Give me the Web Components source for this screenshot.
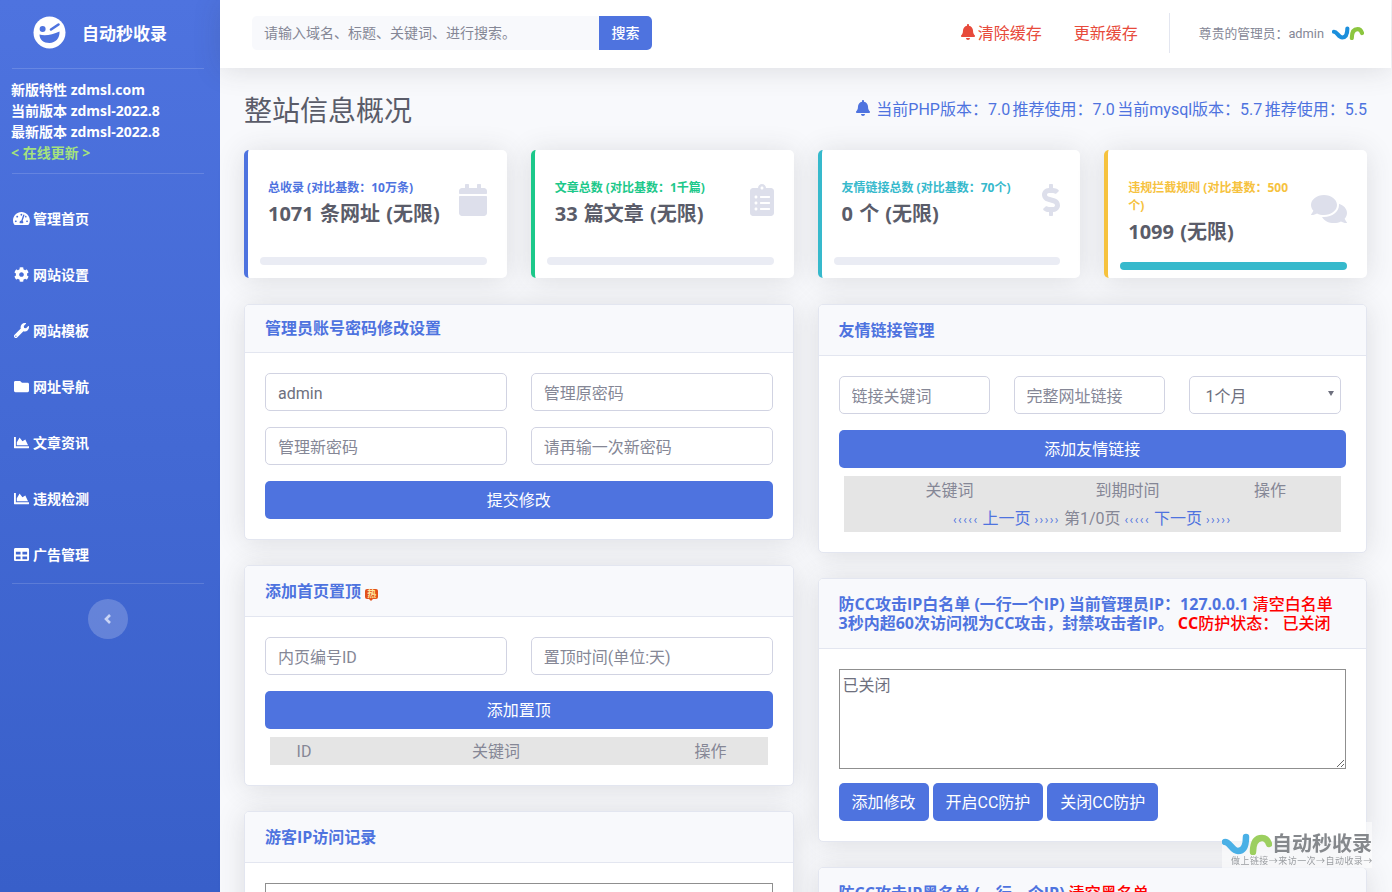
<!DOCTYPE html>
<html lang="zh-CN">
<head>
<meta charset="utf-8">
<title>整站信息概况</title>
<style>
  html, body { margin: 0; height: 100%; overflow: hidden; background: #f8f9fc; }
  body { font-family: Roboto, "Noto Sans CJK SC", sans-serif; font-size: 16px; color: #858796; }
</style>
</head>
<body>
<app-shell>
  <side-bar slot="sidebar">
    <side-item icon="gauge" label="管理首页"></side-item>
    <side-item icon="cog" label="网站设置"></side-item>
    <side-item icon="wrench" label="网站模板"></side-item>
    <side-item icon="folder" label="网址导航"></side-item>
    <side-item icon="area" label="文章资讯"></side-item>
    <side-item icon="area" label="违规检测"></side-item>
    <side-item icon="table" label="广告管理"></side-item>
  </side-bar>
  <top-bar slot="top"></top-bar>

  <page-heading></page-heading>

  <stat-row>
    <stat-card color="#4e73df" icon="calendar" label="总收录 (对比基数：10万条)" value="1071 条网址 (无限)" style="--bar-gap:31px"></stat-card>
    <stat-card color="#1cc88a" icon="clipboard" label="文章总数 (对比基数：1千篇)" value="33 篇文章 (无限)" style="--bar-gap:31px"></stat-card>
    <stat-card color="#36b9cc" icon="dollar" label="友情链接总数 (对比基数：70个)" value="0 个 (无限)" style="--bar-gap:31px"></stat-card>
    <stat-card color="#f6c23e" icon="comments" label="违规拦截规则 (对比基数：500个)" value="1099 (无限)" fill="100" style="--bar-gap:18px;--text-w:170px"></stat-card>
  </stat-row>

  <two-cols>
    <div slot="left">
      <panel-card style="--head:48px">
        <span slot="title">管理员账号密码修改设置</span>
        <form-row>
          <text-field value="admin"></text-field>
          <text-field placeholder="管理原密码"></text-field>
          <text-field placeholder="管理新密码"></text-field>
          <text-field placeholder="请再输一次新密码"></text-field>
        </form-row>
        <action-button block>提交修改</action-button>
      </panel-card>

      <panel-card>
        <span slot="title">添加首页置顶 <hot-badge></hot-badge></span>
        <form-row>
          <text-field placeholder="内页编号ID"></text-field>
          <text-field placeholder="置顶时间(单位:天)"></text-field>
        </form-row>
        <action-button block style="--after:8px">添加置顶</action-button>
        <mini-table columns="68px 316px 113px" heads="ID,关键词,操作"></mini-table>
      </panel-card>

      <panel-card>
        <span slot="title">游客IP访问记录</span>
        <box-area rows="10"></box-area>
      </panel-card>
    </div>

    <div slot="right">
      <panel-card>
        <span slot="title">友情链接管理</span>
        <link-form></link-form>
        <action-button block style="--after:8px">添加友情链接</action-button>
        <mini-table columns="212px 144px 141px" heads="关键词,到期时间,操作" pager></mini-table>
      </panel-card>

      <panel-card style="--head:70px">
        <span slot="title">防CC攻击IP白名单 (一行一个IP) 当前管理员IP：127.0.0.1 <span style="color:#f00;font-weight:500">清空白名单</span><br>3秒内超60次访问视为CC攻击，封禁攻击者IP。 <span style="color:#f00;font-weight:500"><b>CC</b>防护状态： 已关闭</span></span>
        <box-area rows="4" value="已关闭"></box-area>
        <button-row>
          <action-button>添加修改</action-button>
          <action-button>开启CC防护</action-button>
          <action-button>关闭CC防护</action-button>
        </button-row>
      </panel-card>

      <panel-card style="--head:70px;--head-align:flex-start;--head-pad:16px">
        <span slot="title">防CC攻击IP黑名单 (一行一个IP) <span style="color:#f00;font-weight:500">清空黑名单</span></span>
      </panel-card>
    </div>
  </two-cols>
</app-shell>
<site-watermark></site-watermark>

<script>
const BOLD_FONT = '"Open Sans", "Noto Sans CJK SC", sans-serif';

const ICONS = {
  gauge: ["0 0 576 512", "M288 32C128.94 32 0 160.94 0 320c0 52.8 14.25 102.26 39.06 144.8 5.61 9.62 16.3 15.2 27.44 15.2h443c11.14 0 21.83-5.58 27.44-15.2C561.75 422.26 576 372.8 576 320c0-159.06-128.94-288-288-288zm0 64c14.71 0 26.58 10.13 30.32 23.65-1.11 2.26-2.64 4.23-3.45 6.67l-9.22 27.67c-5.13 3.49-10.97 6.01-17.64 6.01-17.67 0-32-14.33-32-32S270.33 96 288 96zM96 384c-17.67 0-32-14.33-32-32s14.33-32 32-32 32 14.33 32 32-14.33 32-32 32zm48-160c-17.67 0-32-14.33-32-32s14.33-32 32-32 32 14.33 32 32-14.33 32-32 32zm246.77-72.41l-61.33 184C343.13 347.33 352 364.54 352 384c0 11.72-3.38 22.55-8.88 32H232.88c-5.5-9.45-8.88-20.28-8.88-32 0-33.94 26.5-61.43 59.9-63.59l61.34-184.01c4.17-12.56 17.73-19.45 30.36-15.17 12.57 4.19 19.35 17.79 15.17 30.36zm14.66 57.2l15.52-46.55c3.47-1.29 7.13-2.23 11.05-2.23 17.67 0 32 14.33 32 32s-14.33 32-32 32c-11.38-.01-20.89-6.28-26.57-15.22zM480 384c-17.67 0-32-14.33-32-32s14.33-32 32-32 32 14.33 32 32-14.33 32-32 32z"],
  cog: ["0 0 512 512", "M487.4 315.7l-42.6-24.6c4.3-23.2 4.3-47 0-70.2l42.6-24.6c4.9-2.8 7.1-8.6 5.5-14-11.1-35.6-30-67.8-54.7-94.6-3.8-4.1-10-5.1-14.8-2.3L380.8 110c-17.9-15.4-38.5-27.3-60.8-35.1V25.8c0-5.6-3.9-10.5-9.4-11.7-36.7-8.2-74.3-7.8-109.2 0-5.5 1.2-9.4 6.1-9.4 11.7V75c-22.2 7.9-42.8 19.8-60.8 35.1L88.7 85.5c-4.9-2.8-11-1.9-14.8 2.3-24.7 26.7-43.6 58.9-54.7 94.6-1.7 5.4.6 11.2 5.5 14L67.3 221c-4.3 23.2-4.3 47 0 70.2l-42.6 24.6c-4.9 2.8-7.1 8.6-5.5 14 11.1 35.6 30 67.8 54.7 94.6 3.8 4.1 10 5.1 14.8 2.3l42.6-24.6c17.9 15.4 38.5 27.3 60.8 35.1v49.2c0 5.6 3.9 10.5 9.4 11.7 36.7 8.2 74.3 7.8 109.2 0 5.5-1.2 9.4-6.1 9.4-11.7v-49.2c22.2-7.9 42.8-19.8 60.8-35.1l42.6 24.6c4.9 2.8 11 1.9 14.8-2.3 24.7-26.7 43.6-58.9 54.7-94.6 1.5-5.5-.7-11.3-5.6-14.1zM256 336c-44.1 0-80-35.9-80-80s35.9-80 80-80 80 35.9 80 80-35.9 80-80 80z"],
  wrench: ["0 0 512 512", "M507.73 109.1c-2.24-9.03-13.54-12.09-20.12-5.51l-74.36 74.36-67.88-11.31-11.31-67.88 74.36-74.36c6.62-6.62 3.43-17.9-5.66-20.16-47.38-11.74-99.55.91-136.58 37.93-39.64 39.64-50.55 97.1-34.05 147.2L18.74 402.76c-24.99 24.99-24.99 65.51 0 90.5 24.99 24.99 65.51 24.99 90.5 0l213.21-213.21c50.12 16.71 107.47 5.68 147.37-34.22 37.07-37.07 49.7-89.32 37.91-136.73zM64 472c-13.25 0-24-10.75-24-24 0-13.26 10.75-24 24-24s24 10.74 24 24c0 13.25-10.75 24-24 24z"],
  folder: ["0 0 512 512", "M464 128H272l-64-64H48C21.49 64 0 85.49 0 112v288c0 26.51 21.49 48 48 48h416c26.51 0 48-21.49 48-48V176c0-26.51-21.49-48-48-48z"],
  area: ["0 0 512 512", "M500 384c6.6 0 12 5.4 12 12v40c0 6.6-5.4 12-12 12H12c-6.6 0-12-5.4-12-12V76c0-6.6 5.4-12 12-12h40c6.6 0 12 5.4 12 12v308h436zM372.7 159.5L288 216l-85.3-113.7c-5.1-6.8-15.5-6.3-19.9 1L96 248v104h384l-89.9-187.8c-3.2-6.5-11.4-8.7-17.4-4.7z"],
  table: ["0 0 512 512", "M464 32H48C21.49 32 0 53.49 0 80v352c0 26.51 21.49 48 48 48h416c26.51 0 48-21.49 48-48V80c0-26.51-21.49-48-48-48zM224 416H64v-96h160v96zm0-160H64v-96h160v96zm224 160H288v-96h160v96zm0-160H288v-96h160v96z"],
  bell: ["0 0 448 512", "M224 512c35.32 0 63.97-28.65 63.97-64H160.03c0 35.35 28.65 64 63.97 64zm215.39-149.71c-19.32-20.76-55.47-51.99-55.47-154.29 0-77.7-54.48-139.9-127.94-155.16V32c0-17.67-14.32-32-31.98-32s-31.98 14.33-31.98 32v20.84C118.56 68.1 64.08 130.3 64.08 208c0 102.3-36.15 133.53-55.47 154.29-6 6.45-8.66 14.16-8.61 21.71.11 16.4 12.98 32 32.1 32h383.8c19.12 0 32-15.6 32.1-32 .05-7.55-2.61-15.27-8.61-21.71z"],
  calendar: ["0 0 448 512", "M12 192h424c6.6 0 12 5.4 12 12v260c0 26.5-21.5 48-48 48H48c-26.5 0-48-21.5-48-48V204c0-6.6 5.4-12 12-12zm436-44v-36c0-26.5-21.5-48-48-48h-48V12c0-6.6-5.4-12-12-12h-40c-6.6 0-12 5.4-12 12v52H160V12c0-6.6-5.4-12-12-12h-40c-6.6 0-12 5.4-12 12v52H48C21.5 64 0 85.5 0 112v36c0 6.6 5.4 12 12 12h424c6.6 0 12-5.4 12-12z"],
  clipboard: ["0 0 384 512", "M336 64h-80c0-35.3-28.7-64-64-64s-64 28.7-64 64H48C21.5 64 0 85.5 0 112v352c0 26.5 21.5 48 48 48h288c26.5 0 48-21.5 48-48V112c0-26.5-21.5-48-48-48zM96 424c-13.3 0-24-10.7-24-24s10.7-24 24-24 24 10.7 24 24-10.7 24-24 24zm0-96c-13.3 0-24-10.7-24-24s10.7-24 24-24 24 10.7 24 24-10.7 24-24 24zm0-96c-13.3 0-24-10.7-24-24s10.7-24 24-24 24 10.7 24 24-10.7 24-24 24zm96-192c13.3 0 24 10.7 24 24s-10.7 24-24 24-24-10.7-24-24 10.7-24 24-24zm128 368c0 4.4-3.6 8-8 8H168c-4.4 0-8-3.6-8-8v-16c0-4.4 3.6-8 8-8h144c4.4 0 8 3.6 8 8v16zm0-96c0 4.4-3.6 8-8 8H168c-4.4 0-8-3.6-8-8v-16c0-4.4 3.6-8 8-8h144c4.4 0 8 3.6 8 8v16zm0-96c0 4.4-3.6 8-8 8H168c-4.4 0-8-3.6-8-8v-16c0-4.4 3.6-8 8-8h144c4.4 0 8 3.6 8 8v16z"],
  dollar: ["0 0 288 512", "M209.2 233.4l-108-31.6C88.7 198.2 80 186.5 80 173.5c0-16.3 13.2-29.5 29.5-29.5h66.3c12.2 0 24.2 3.7 34.2 10.5 6.1 4.1 14.3 3.1 19.5-2l34.8-34c7.1-6.9 6.1-18.4-1.8-24.5C238 74.8 207.4 64.1 176 64V16c0-8.8-7.2-16-16-16h-32c-8.8 0-16 7.2-16 16v48h-2.5C45.8 64-5.4 118.7.5 183.6c4.2 46.1 39.4 83.6 83.8 96.6l102.5 30c12.5 3.7 21.2 15.3 21.2 28.3 0 16.3-13.2 29.5-29.5 29.5h-66.3C100 368 88 364.3 78 357.5c-6.1-4.1-14.3-3.1-19.5 2l-34.8 34c-7.1 6.9-6.1 18.4 1.8 24.5 24.5 19.2 55.1 29.9 86.5 30v48c0 8.8 7.2 16 16 16h32c8.8 0 16-7.2 16-16v-48.2c46.6-.9 90.3-28.6 105.7-72.7 21.5-61.6-14.6-124.8-72.5-141.7z"],
  comments: ["0 0 576 512", "M416 192c0-88.4-93.1-160-208-160S0 103.6 0 192c0 34.3 14.1 65.9 38 92-13.4 30.2-35.5 54.2-35.8 54.5-2.2 2.3-2.8 5.7-1.5 8.7S4.8 352 8 352c36.6 0 66.9-12.3 88.7-25 32.2 15.7 70.3 25 111.3 25 114.9 0 208-71.6 208-160zm122 220c23.9-26 38-57.7 38-92 0-66.9-53.5-124.2-129.3-148.1.9 6.6 1.3 13.3 1.3 20.1 0 105.9-107.7 192-240 192-10.8 0-21.3-.8-31.7-1.9C207.8 439.6 281.8 480 368 480c41 0 79.1-9.2 111.3-25 21.8 12.7 52.1 25 88.7 25 3.2 0 6.1-1.9 7.3-4.8 1.3-2.9.7-6.3-1.5-8.7-.3-.3-22.4-24.2-35.8-54.5z"]
};

function iconSvg(name, height, color) {
  const [box, d] = ICONS[name];
  const [, , w, h] = box.split(" ").map(Number);
  return `<svg width="${height * w / h}" height="${height}" viewBox="${box}" fill="${color}" aria-hidden="true"><path d="${d}"/></svg>`;
}

// small JN mark used in the top bar and the watermark
function jnLogo(width, height, blue, green) {
  return `<svg width="${width}" height="${height}" viewBox="0 0 50 22" fill="none" aria-hidden="true">
    <path d="M3 9c5 0 7 9 13 9 6 0 8-6 8-14" stroke="${blue}" stroke-width="6.500" stroke-linecap="round"/>
    <path d="M31 19c0-9 3-14 9-14 4 0 6 3 7 6" stroke="${green}" stroke-width="6.500" stroke-linecap="round"/>
  </svg>`;
}

class AppShell extends HTMLElement {
  constructor() {
    super();
    this.attachShadow({ mode: "open" });
    this.shadowRoot.innerHTML = `
      <style>
        :host { display: flex; height: 892px; overflow: hidden; }
        .side { flex: 0 0 220px; }
        .main { flex: 1; min-width: 0; margin-right: 1px; display: flex; flex-direction: column; }
        .content { padding: 24px 24px 0; display: flex; flex-direction: column; gap: 24px; }
      </style>
      <div class="side"><slot name="sidebar"></slot></div>
      <div class="main">
        <slot name="top"></slot>
        <div class="content"><slot></slot></div>
      </div>`;
  }
}

class SideBar extends HTMLElement {
  constructor() {
    super();
    this.attachShadow({ mode: "open" });
    this.shadowRoot.innerHTML = `
      <style>
        :host { display: block; height: 892px; color: #fff; font-family: ${BOLD_FONT}; background: linear-gradient(180deg, #4e73df 0%, #385fc9 100%); }
        .brand { height: 68px; box-sizing: border-box; padding: 0 0 4px 33px; display: flex; align-items: center; gap: 16px; font-size: 17px; font-weight: 700; }
        hr { margin: 0 16px 0 12px; border: 0; border-top: 1px solid rgba(255,255,255,.15); }
        .info { height: 104px; box-sizing: border-box; padding: 10px 0 0 11px; font-size: 14px; line-height: 21px; font-weight: 700; }
        .update { color: #a5e27d; }
        nav { margin: 16px 0 1px; }
        .toggle { width: 40px; height: 40px; margin: 15px 0 0 88px; border-radius: 50%; background: rgba(255,255,255,.2); display: flex; align-items: center; justify-content: center; }
      </style>
      <div class="brand">
        <svg width="33" height="33" viewBox="0 0 33 33" aria-hidden="true">
          <circle cx="16.500" cy="16.500" r="16" fill="#fff"/>
          <circle cx="9.600" cy="13" r="3" fill="#4e73df"/>
          <path d="M18 13.500l7.500-5" stroke="#4e73df" stroke-width="2.600" stroke-linecap="round"/>
          <path d="M6.500 18.500c5 1.500 13 .5 20-3 .5 6.500-4 11.500-10 11.500s-10-3.500-10-8.500z" fill="#4e73df"/>
        </svg>
        <span>自动秒收录</span>
      </div>
      <hr>
      <div class="info">
        <div>新版特性 zdmsl.com</div>
        <div>当前版本 zdmsl-2022.8</div>
        <div>最新版本 zdmsl-2022.8</div>
        <div class="update">&lt; 在线更新 &gt;</div>
      </div>
      <hr>
      <nav><slot></slot></nav>
      <hr>
      <div class="toggle">
        <svg width="8" height="12" viewBox="0 0 8 12" fill="none" aria-hidden="true"><path d="M6 2L2 6l4 4" stroke="#c9d4f5" stroke-width="2.600"/></svg>
      </div>`;
  }
}

class SideItem extends HTMLElement {
  connectedCallback() {
    if (this.shadowRoot) return;
    this.attachShadow({ mode: "open" });
    this.shadowRoot.innerHTML = `
      <style>
        :host { display: flex; height: 56px; align-items: center; padding-left: 13px; font-size: 14px; font-weight: 700; color: #fff; }
        .ic { width: 17px; margin-right: 3px; display: flex; justify-content: center; }
      </style>
      <span class="ic">${iconSvg(this.getAttribute("icon"), 15, "#fff")}</span>
      <span>${this.getAttribute("label")}</span>`;
  }
}

class TopBar extends HTMLElement {
  constructor() {
    super();
    this.attachShadow({ mode: "open" });
    this.shadowRoot.innerHTML = `
      <style>
        :host { display: flex; flex: 0 0 68px; box-sizing: border-box; align-items: center; background: #fff; box-shadow: 0 2px 28px rgba(58,59,69,.15); padding: 0 27px 2px 32px; position: relative; }
        .search { display: flex; width: 400px; height: 34px; }
        input { flex: 1; min-width: 0; border: 0; outline: 0; padding: 0 12px; background: #f8f9fc; font: inherit; font-size: 14px; border-radius: 5px 0 0 5px; }
        input::placeholder { color: #858796; opacity: 1; }
        button { width: 53px; border: 0; padding: 0 0 2px; background: #4e73df; color: #fff; font: inherit; font-size: 14px; font-weight: 500; border-radius: 0 5px 5px 0; }
        .links { margin-left: auto; display: flex; align-items: center; color: #e74a3b; padding-bottom: 2px; }
        .links svg { margin-right: 3px; }
        .links span + span { margin-left: 32px; }
        .sep { width: 1px; height: 40px; background: #e3e6f0; margin: 0 29px 0 31px; }
        .user { font-size: 12.8px; color: #858796; margin-right: 8px; padding-bottom: 2px; white-space: nowrap; }
      </style>
      <div class="search">
        <input placeholder="请输入域名、标题、关键词、进行搜索。">
        <button>搜索</button>
      </div>
      <div class="links">
        ${iconSvg("bell", 16, "#e74a3b")}<span>清除缓存</span><span>更新缓存</span>
      </div>
      <div class="sep"></div>
      <span class="user">尊贵的管理员：admin</span>
      ${jnLogo(32, 14, "#1b8fdc", "#8cc63f")}`;
  }
}

class PageHeading extends HTMLElement {
  constructor() {
    super();
    this.attachShadow({ mode: "open" });
    this.shadowRoot.innerHTML = `
      <style>
        :host { display: flex; align-items: center; justify-content: space-between; height: 34px; }
        h1 { margin: 0; padding-top: 6px; font-size: 28px; font-weight: 400; color: #5a5c69; line-height: 28px; }
        .ver { color: #4e73df; display: flex; align-items: center; gap: 6px; padding-bottom: 2px; word-spacing: -1.5px; }
      </style>
      <h1>整站信息概况</h1>
      <div class="ver">${iconSvg("bell", 16, "#4e73df")}<span>当前PHP版本：7.0 推荐使用：7.0 当前mysql版本：5.7 推荐使用：5.5</span></div>`;
  }
}

class StatRow extends HTMLElement {
  constructor() {
    super();
    this.attachShadow({ mode: "open" });
    this.shadowRoot.innerHTML = `
      <style>:host { display: grid; grid-template-columns: repeat(4, 1fr); gap: 24px; }</style>
      <slot></slot>`;
  }
}

class StatCard extends HTMLElement {
  connectedCallback() {
    if (this.shadowRoot) return;
    this.attachShadow({ mode: "open" });
    const color = this.getAttribute("color");
    const fill = this.getAttribute("fill") || 0;
    this.shadowRoot.innerHTML = `
      <style>
        :host { display: block; height: 128px; box-sizing: border-box; font-family: ${BOLD_FONT}; background: #fff; border-left: 4px solid ${color}; border-radius: 5px; box-shadow: 0 2px 28px rgba(58,59,69,.15); padding: 29px 20px 0 20px; }
        .row { display: flex; justify-content: space-between; align-items: center; }
        .txt { width: var(--text-w, auto); }
        .label { font-size: 12px; line-height: 18px; font-weight: 700; color: ${color}; }
        .value { font-size: 20px; line-height: 24px; margin-top: 5px; font-weight: 700; color: #5a5c69; word-spacing: 1px; }
        .ic { display: flex; flex: none; margin-bottom: 5px; }
        .bar { height: 8px; margin: var(--bar-gap) 0 0 -8px; background: #eaecf4; border-radius: 5px; overflow: hidden; }
        .bar i { display: block; height: 100%; width: ${fill}%; background: #36b9cc; }
      </style>
      <div class="row">
        <div class="txt">
          <div class="label">${this.getAttribute("label")}</div>
          <div class="value">${this.getAttribute("value")}</div>
        </div>
        <span class="ic">${iconSvg(this.getAttribute("icon"), 32, "#dddfeb")}</span>
      </div>
      <div class="bar"><i></i></div>`;
  }
}

class TwoCols extends HTMLElement {
  constructor() {
    super();
    this.attachShadow({ mode: "open" });
    this.shadowRoot.innerHTML = `
      <style>
        :host { display: grid; grid-template-columns: 1fr 1fr; gap: 24px; margin-top: 2px; }
        ::slotted(*) { display: flex; flex-direction: column; gap: 25px; min-width: 0; }
      </style>
      <slot name="left"></slot><slot name="right"></slot>`;
  }
}

class PanelCard extends HTMLElement {
  constructor() {
    super();
    this.attachShadow({ mode: "open" });
    this.shadowRoot.innerHTML = `
      <style>
        :host { display: block; background: #fff; border: 1px solid #e3e6f0; border-radius: 5px; box-shadow: 0 2px 28px rgba(58,59,69,.15); overflow: hidden; }
        header { height: var(--head, 51px); box-sizing: border-box; display: flex; align-items: var(--head-align, center); padding: var(--head-pad, 0) 20px 0; background: #f8f9fc; border-bottom: 1px solid #e3e6f0; font-family: ${BOLD_FONT}; font-weight: 700; color: #4e73df; line-height: 19px; }
        .body { padding: 20px; }
      </style>
      <header><div><slot name="title"></slot></div></header>
      <div class="body"><slot></slot></div>`;
  }
}

class HotBadge extends HTMLElement {
  constructor() {
    super();
    this.attachShadow({ mode: "open" });
    this.shadowRoot.innerHTML = `
      <style>
        :host { display: inline-block; position: relative; width: 13px; height: 10px; background: #e2521b; border-radius: 2px; vertical-align: 0; }
        :host::after { content: ""; position: absolute; left: 4px; top: 10px; border: 2px solid transparent; border-top-color: #e2521b; }
        span { display: block; font-size: 9px; line-height: 10px; text-align: center; color: #ffe9a0; font-weight: 700; }
      </style>
      <span>热</span>`;
  }
}

class FormRow extends HTMLElement {
  constructor() {
    super();
    this.attachShadow({ mode: "open" });
    this.shadowRoot.innerHTML = `
      <style>:host { display: grid; grid-template-columns: 1fr 1fr; gap: 16px 24px; margin-bottom: 16px; }</style>
      <slot></slot>`;
  }
}

class TextField extends HTMLElement {
  connectedCallback() {
    if (this.shadowRoot) return;
    this.attachShadow({ mode: "open" });
    this.shadowRoot.innerHTML = `
      <style>
        :host { display: block; min-width: 0; }
        input { display: block; width: 100%; height: 38px; box-sizing: border-box; padding: 2px 12px 0; border: 1px solid #d1d3e2; border-radius: 5px; background: #fff; font: inherit; color: #6e707e; outline: 0; }
        input::placeholder { color: #858796; opacity: 1; }
      </style>
      <input>`;
    const input = this.shadowRoot.querySelector("input");
    input.placeholder = this.getAttribute("placeholder") || "";
    input.value = this.getAttribute("value") || "";
  }
}

class LinkForm extends HTMLElement {
  constructor() {
    super();
    this.attachShadow({ mode: "open" });
    this.shadowRoot.innerHTML = `
      <style>
        :host { display: grid; grid-template-columns: 151px 151px 152px; gap: 24px; margin-bottom: 16px; }
        .pick { position: relative; display: block; }
        .pick::after { content: ""; position: absolute; right: 7px; top: 15px; border: 3.500px solid transparent; border-top: 5px solid #6e707e; border-bottom: 0; }
        select { display: block; appearance: none; height: 38px; width: 100%; box-sizing: border-box; padding: 2px 13px 0 16px; border: 1px solid #d1d3e2; border-radius: 5px; background: #fff; font: inherit; color: #6e707e; outline: 0; }
      </style>
      <text-field placeholder="链接关键词"></text-field>
      <text-field placeholder="完整网址链接"></text-field>
      <span class="pick"><select><option>1个月</option></select></span>`;
  }
}

class ActionButton extends HTMLElement {
  constructor() {
    super();
    this.attachShadow({ mode: "open" });
    this.shadowRoot.innerHTML = `
      <style>
        :host { display: inline-block; margin-bottom: var(--after, 0); }
        :host([block]) { display: block; }
        button { display: block; width: 100%; height: 38px; padding: 0 13px 2px; border: 0; border-radius: 5px; background: #4e73df; color: #fff; font: inherit; }
      </style>
      <button><slot></slot></button>`;
  }
}

class ButtonRow extends HTMLElement {
  constructor() {
    super();
    this.attachShadow({ mode: "open" });
    this.shadowRoot.innerHTML = `
      <style>:host { display: flex; gap: 4px; margin-top: 14px; }</style>
      <slot></slot>`;
  }
}

class MiniTable extends HTMLElement {
  connectedCallback() {
    if (this.shadowRoot) return;
    this.attachShadow({ mode: "open" });
    const heads = this.getAttribute("heads").split(",");
    const pager = this.hasAttribute("pager") ? `
      <div class="pager"><small>‹‹‹‹‹</small> <a>上一页</a> <small>›››››</small> 第1/0页 <small>‹‹‹‹‹</small> <a>下一页</a> <small>›››››</small></div>` : "";
    this.shadowRoot.innerHTML = `
      <style>
        :host { display: block; margin: 0 5px; background: #e5e5e5; line-height: 30px; text-align: center; color: #858796; }
        .cols { display: grid; grid-template-columns: ${this.getAttribute("columns")}; height: 28px; }
        .pager { height: 28px; }
        a, small { color: #4e73df; }
        small { font-size: 12px; letter-spacing: 1.5px; }
      </style>
      <div class="cols">${heads.map(h => `<span>${h}</span>`).join("")}</div>${pager}`;
  }
}

class BoxArea extends HTMLElement {
  connectedCallback() {
    if (this.shadowRoot) return;
    this.attachShadow({ mode: "open" });
    this.shadowRoot.innerHTML = `
      <style>
        :host { display: block; }
        textarea { display: block; width: 100%; box-sizing: border-box; height: ${this.getAttribute("rows") * 25}px; padding: 2px 3px; border: 1px solid #8f8f8f; background: #fff; font: inherit; color: #6e707e; outline: 0; margin: 0; }
      </style>
      <textarea></textarea>`;
    this.shadowRoot.querySelector("textarea").value = this.getAttribute("value") || "";
  }
}

class SiteWatermark extends HTMLElement {
  constructor() {
    super();
    this.attachShadow({ mode: "open" });
    this.shadowRoot.innerHTML = `
      <style>
        :host { position: fixed; left: 1222px; top: 822px; width: 150px; height: 46px; background: rgba(255,255,255,.55); }
        .top { position: absolute; left: 0; top: 11px; display: flex; align-items: center; }
        .name { font-size: 20px; line-height: 20px; font-weight: 700; color: #85888c; white-space: nowrap; }
        .sub { position: absolute; left: 9px; top: 34px; font-size: 9px; line-height: 10px; letter-spacing: .45px; color: #9a9da1; white-space: nowrap; }
      </style>
      <div class="top">${jnLogo(50, 22, "#4ab0e6", "#9ccf5f")}<span class="name">自动秒收录</span></div>
      <div class="sub">做上链接→来访一次→自动收录→</div>`;
  }
}

customElements.define("app-shell", AppShell);
customElements.define("side-bar", SideBar);
customElements.define("side-item", SideItem);
customElements.define("top-bar", TopBar);
customElements.define("page-heading", PageHeading);
customElements.define("stat-row", StatRow);
customElements.define("stat-card", StatCard);
customElements.define("two-cols", TwoCols);
customElements.define("panel-card", PanelCard);
customElements.define("hot-badge", HotBadge);
customElements.define("form-row", FormRow);
customElements.define("text-field", TextField);
customElements.define("link-form", LinkForm);
customElements.define("action-button", ActionButton);
customElements.define("button-row", ButtonRow);
customElements.define("mini-table", MiniTable);
customElements.define("box-area", BoxArea);
customElements.define("site-watermark", SiteWatermark);
</script>
</body>
</html>
